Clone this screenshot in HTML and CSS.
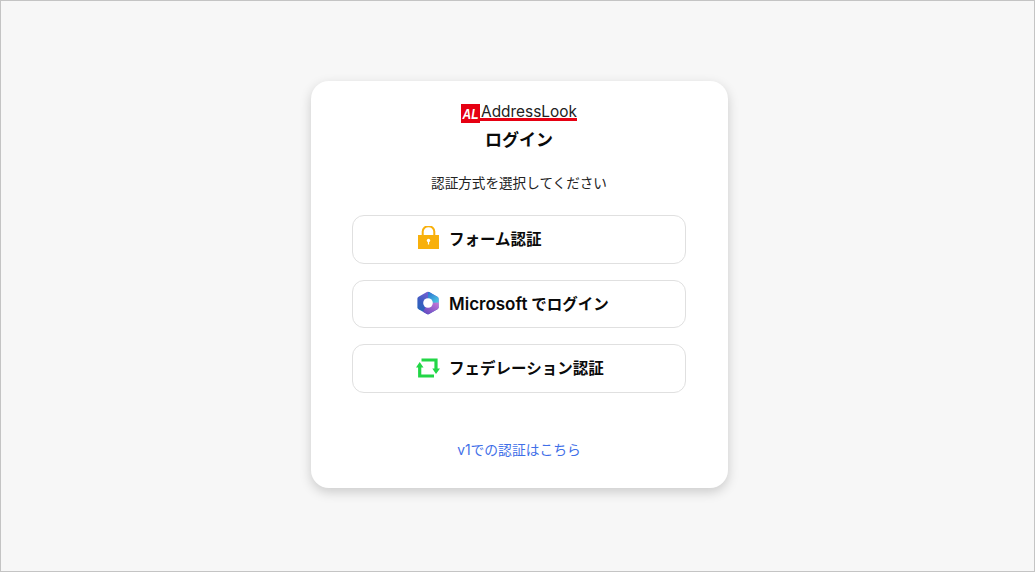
FILE: index.html
```html
<!DOCTYPE html>
<html lang="ja">
<head>
  <meta charset="UTF-8" />
  <title>AddressLook ログイン</title>
  <link rel="stylesheet" href="styles.css">
</head>
<body>
  <div class="page">
    <main class="card">
      <div class="logo">
        <svg class="logo-mark" viewBox="0 0 19 19" aria-hidden="true">
          <rect width="19" height="19" fill="#e60012"/>
          <text class="logo-mark-text" x="1.5" y="15" textLength="16" lengthAdjust="spacingAndGlyphs">AL</text>
        </svg>
        <span class="logo-text">AddressLook</span>
      </div>
      <h1 class="title">ログイン</h1>
      <p class="lead">認証方式を選択してください</p>

      <div class="methods">
        <a class="method" href="#form">
          <span class="method-inner">
            <svg class="icon" viewBox="0 1 24 24" aria-hidden="true">
              <path d="M6.7 11 V6.5 a5.8 5.3 0 0 1 11.6 0 V11" fill="none" stroke="#f8b00c" stroke-width="2"/>
              <rect x="2" y="10" width="21" height="14" fill="#f8b00c"/>
              <circle cx="12.5" cy="15.5" r="1.7" fill="#fff"/>
              <rect x="11.9" y="15.5" width="1.2" height="4" fill="#fff"/>
            </svg>
            <span>フォーム認証</span>
          </span>
        </a>
        <a class="method" href="#microsoft">
          <span class="method-inner">
            <svg class="icon" viewBox="0 0 24 24" aria-hidden="true">
              <defs>
                <linearGradient id="ms-a" x1="0.8" y1="0" x2="0.2" y2="1">
                  <stop offset="0" stop-color="#8a5fd8"/>
                  <stop offset="0.6" stop-color="#3a5cc0"/>
                  <stop offset="1" stop-color="#2468b8"/>
                </linearGradient>
                <linearGradient id="ms-b" x1="0" y1="0" x2="1" y2="1">
                  <stop offset="0" stop-color="#2a6fd0"/>
                  <stop offset="1" stop-color="#4fd0e4"/>
                </linearGradient>
                <linearGradient id="ms-c" x1="0" y1="1" x2="1" y2="0">
                  <stop offset="0" stop-color="#5a46c0"/>
                  <stop offset="1" stop-color="#c878d8"/>
                </linearGradient>
              </defs>
              <path d="M10.9 1.1 a2.4 2.4 0 0 1 2.2 0 L21.4 5.7 a2.4 2.4 0 0 1 1.2 2 V16.3 a2.4 2.4 0 0 1 -1.2 2 L13.1 23 a2.4 2.4 0 0 1 -2.2 0 L2.6 18.3 a2.4 2.4 0 0 1 -1.2 -2 V7.7 a2.4 2.4 0 0 1 1.2 -2 Z" fill="url(#ms-a)"/>
              <path d="M12 0.9 a2.4 2.4 0 0 1 1.1 0.2 L21.4 5.7 a2.4 2.4 0 0 1 1.2 2 V12 H12 Z" fill="url(#ms-b)"/>
              <path d="M22.6 11.5 V16.3 a2.4 2.4 0 0 1 -1.2 2 L13.1 23 a2.4 2.4 0 0 1 -2.2 0 L7 20.8 L12 12 Z" fill="url(#ms-c)"/>
              <circle cx="12" cy="12" r="4.8" fill="#fff"/>
            </svg>
            <span><span class="latin">Microsoft</span> でログイン</span>
          </span>
        </a>
        <a class="method" href="#federation">
          <span class="method-inner">
            <svg class="icon" viewBox="0 -1.5 24 24" aria-hidden="true">
              <path d="M5.5 3.5 H20 V13 M3.7 10 V19.5 H18" fill="none" stroke="#22d646" stroke-width="3.2"/>
              <path d="M0 11 L3.7 5.5 L7.5 11 Z M16.3 12 H24 L20 17.5 Z" fill="#22d646"/>
            </svg>
            <span>フェデレーション認証</span>
          </span>
        </a>
      </div>

      <a class="v1-link" href="#v1">v1での認証はこちら</a>
    </main>
  </div>
</body>
</html>
```

FILE: styles.css
```css
html, body {
  height: 100%;
}

body {
  margin: 0;
  font-family: 'Inter', 'Noto Sans CJK JP', sans-serif;
  color: #0a0a0a;
  background: #f7f7f7;
}

.page {
  box-sizing: border-box;
  height: 572px;
  padding: 80px 0 0 4px;
  border: 1px solid #c4c4c4;
  display: flex;
  justify-content: center;
  align-items: flex-start;
}

.card {
  box-sizing: border-box;
  width: 417px;
  height: 407px;
  padding: 23px 42px 0 41px;
  background: #fff;
  border-radius: 18px;
  box-shadow: 0 4px 12px rgba(0, 0, 0, 0.18);
  display: flex;
  flex-direction: column;
  align-items: center;
}

.logo {
  box-sizing: border-box;
  display: flex;
  align-items: flex-start;
  height: 17px;
  line-height: 15px;
  border-bottom: 3px solid #e60012;
}

.logo-mark {
  width: 19px;
  height: 19px;
  margin-right: 1px;
  flex: none;
  overflow: visible;
}

.logo-mark-text {
  font-family: 'Liberation Sans', sans-serif;
  font-size: 15px;
  font-weight: 700;
  font-style: italic;
  fill: #fff;
}

.logo-text {
  font-size: 15.4px;
  color: #222;
}

.title {
  margin: 7px 0 0;
  font-size: 17px;
  line-height: 24px;
  font-weight: 700;
}

.lead {
  margin: 21px 0 0;
  font-size: 13.6px;
  line-height: 20px;
  color: #222;
}

.methods {
  width: 100%;
  margin-top: 22px;
  display: flex;
  flex-direction: column;
  gap: 16px;
}

.method {
  box-sizing: border-box;
  height: 48.5px;
  padding-bottom: 2px;
  border: 1px solid #e0e0e0;
  border-radius: 12px;
  display: flex;
  align-items: center;
  justify-content: center;
  text-decoration: none;
  color: #0a0a0a;
  font-size: 15.5px;
  font-weight: 600;
}

.method-inner {
  width: 206px;
  display: flex;
  align-items: center;
  gap: 9px;
  white-space: nowrap;
}

.latin {
  font-size: 17px;
}

.icon {
  width: 24px;
  height: 24px;
  flex: none;
}

.v1-link {
  margin-top: 47.5px;
  font-size: 13.8px;
  line-height: 20px;
  color: #3f6fe8;
  text-decoration: none;
}
```
